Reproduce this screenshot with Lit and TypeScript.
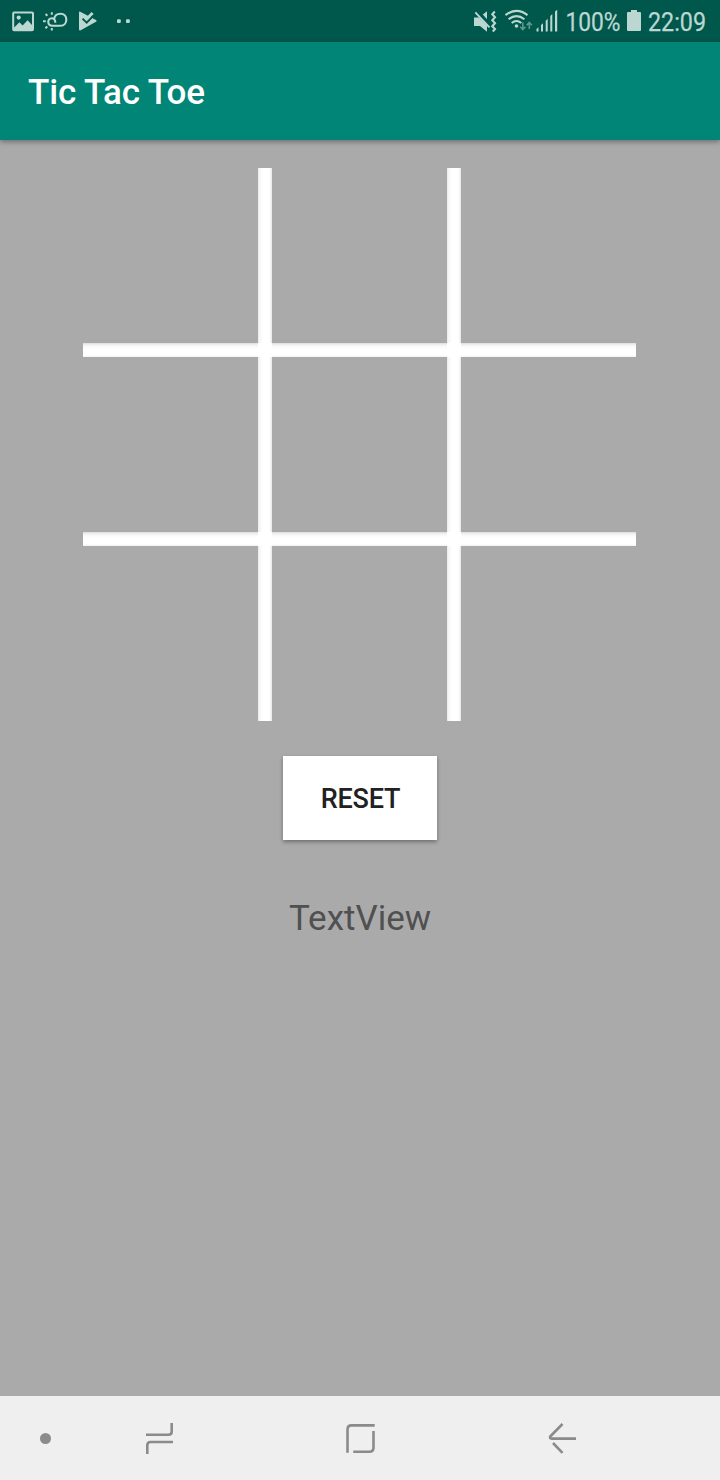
import { LitElement, html, css } from "lit";
import { customElement } from "lit/decorators.js";

@customElement("status-bar")
class StatusBar extends LitElement {
  static styles = css`
    :host { display: block; height: 42px; background: #00574b; color: #bcd7d2; }
    .bar { display: flex; justify-content: space-between; height: 42px; }
    svg { display: block; flex: none; }
    text { font-family: Roboto, sans-serif; font-size: 26px; fill: #bcd7d2; stroke: #bcd7d2; stroke-width: 0.250px; }
  `;
  render() {
    return html`
      <div class="bar">
        <svg width="140" height="42" viewBox="0 0 140 42" fill="none">
          <path fill="currentColor" fill-rule="evenodd" d="M14 11.5H32Q34 11.5 34 13.5V29.200Q34 31.200 32 31.200H14Q12.200 31.200 12.200 29.200V13.500Q12.200 11.500 14 11.500ZM14.200 13.500V27.500L19.400 22.300L22.600 25.500L27.600 20.300L32 25V13.500Z"/>
          <circle cx="18.700" cy="17.600" r="2.100" fill="currentColor"/>
          <path stroke="currentColor" stroke-width="2.100" d="M55.300 22.800C55.300 20 53.800 18.200 51.800 18.200C47 18.200 47 25.700 52.300 25.700H60.500C68.300 25.600 68.200 13.700 60.500 13.700C56.700 13.700 54.600 16 54.200 18.800"/>
          <path stroke="currentColor" stroke-width="2" d="M51.800 12.200V14.800M45.600 14L47.400 15.800M43 21.200H45.800M45.400 28.200L47.300 26.400M51.800 28V30.500"/>
          <path fill="currentColor" d="M79 12.800Q79 11 80.700 11.900L96 20.100Q97.500 21 96 21.800L80.700 30.200Q79 31 79 29.300Z"/>
          <path stroke="currentColor" stroke-width="3" d="M87 18.800L92.600 13"/>
          <path stroke="#00574b" stroke-width="2" d="M82.500 18.600L86.700 22.600L93.500 15.600"/>
          <rect x="117" y="19.200" width="3.800" height="3.800" rx="1" fill="currentColor"/>
          <rect x="126" y="19.200" width="3.800" height="3.800" rx="1" fill="currentColor"/>
        </svg>
        <svg width="255" height="42" viewBox="465 0 255 42" fill="none">
          <path fill="currentColor" d="M474 17.500H479L487 25.500V31.800L480 26H474ZM482.800 14.600L487 11.200V19.200Z"/>
          <path stroke="currentColor" stroke-width="1.900" d="M475.300 12.300L489.500 27.300"/>
          <path stroke="currentColor" stroke-width="2.100" d="M494.800 11.500L492.300 14.200L495 17.200L492.300 20.200L495 23.200L492.300 26.200L495 29L492.800 31.500"/>
          <path stroke="currentColor" stroke-width="2.100" d="M505.500 15.100Q516.500 6.800 527.500 15.100M508.600 19.200Q516.500 12.900 524.400 19.200M511.700 23Q516.500 19 521.300 23"/>
          <circle cx="516.500" cy="26" r="1.800" fill="currentColor"/>
          <path stroke="#5e978e" stroke-width="1.600" d="M522.800 22.500V29.500M520.200 26.800L522.800 29.600L525.400 26.800M529.300 29V22.500M526.700 25.200L529.300 22.400L531.900 25.200"/>
          <path fill="currentColor" d="M536.500 29L538.500 27.200V31.500H536.500ZM541 25L543 23.200V31.500H541ZM545.700 20.700L547.700 18.700V31.500H545.700ZM550.300 16L552.300 14V31.500H550.300ZM555 11.500L557.200 9.800V31.500H555Z"/>
          <text x="565.500" y="31" textLength="55" lengthAdjust="spacingAndGlyphs">100%</text>
          <path fill="currentColor" d="M631 10H637V12H640Q641 12 641 13V30Q641 31 640 31H628Q627 31 627 30V13Q627 12 628 12H631Z"/>
          <text x="648" y="31" textLength="58" lengthAdjust="spacingAndGlyphs">22:09</text>
        </svg>
      </div>
    `;
  }
}

@customElement("game-board")
class GameBoard extends LitElement {
  static styles = css`
    :host { display: block; width: 553px; height: 553px; }
    .board {
      display: grid; height: 553px;
      grid-template: 175px 14px 175px 14px 175px / 175px 14px 175px 14px 175px;
    }
    .v { grid-row: 1 / -1; background: linear-gradient(to right, #e6e6e6, #f4f4f4 1px, #fafafa 3px, #fff 5px, #fff 11px, #f4f4f4 13px, #e2e2e2 14px); }
    .h { grid-column: 1 / -1; background: linear-gradient(#dcdcdc, #ededed 1.500px, #f8f8f8 3px, #fff 6px, #fff 12px, #f2f2f2 14px); }
    .v1 { grid-column: 2; }
    .v2 { grid-column: 4; }
    .h1 { grid-row: 2; }
    .h2 { grid-row: 4; }
    .x { background: #fff; }
    .x1 { grid-area: 2 / 2; }
    .x2 { grid-area: 2 / 4; }
    .x3 { grid-area: 4 / 2; }
    .x4 { grid-area: 4 / 4; }
  `;
  render() {
    return html`
      <div class="board">
        <div class="v v1"></div><div class="v v2"></div>
        <div class="h h1"></div><div class="h h2"></div>
        <div class="x x1"></div><div class="x x2"></div>
        <div class="x x3"></div><div class="x x4"></div>
      </div>
    `;
  }
}

@customElement("nav-bar")
class NavBar extends LitElement {
  static styles = css`
    :host { display: block; height: 84px; background: #efefef; }
    .nav { display: flex; align-items: center; height: 84px; padding-left: 35px; }
    svg { display: block; flex: none; fill: none; stroke: #8b8b8b; stroke-width: 2.600px; }
    .dot { width: 20px; height: 40px; margin-right: 85px; fill: #8b8b8b; stroke: none; }
    .recent { width: 40px; height: 40px; margin-right: 160px; }
    .home { width: 40px; height: 40px; margin-right: 160px; }
    .back { width: 40px; height: 40px; }
  `;
  render() {
    return html`
      <div class="nav">
        <svg class="dot" viewBox="35 1418 20 40"><circle cx="45.500" cy="1438.500" r="5.500"/></svg>
        <svg class="recent" viewBox="140 1418 40 40">
          <path d="M171.700 1423V1431.500Q171.700 1434.800 168.400 1434.800H146M173 1442H150.500Q147.300 1442 147.300 1445.300V1454"/>
        </svg>
        <svg class="home" viewBox="340 1418 40 40">
          <path d="M374.700 1425.400H351.500Q347.500 1425.400 347.500 1429.400V1452.800M373.500 1431V1447.500Q373.500 1451.700 369.300 1451.700H353.200"/>
        </svg>
        <svg class="back" viewBox="540 1418 40 40">
          <path d="M562.500 1424L550.200 1436.500Q549.500 1438.600 551.500 1438.600H576M553 1443L562.500 1452.800"/>
        </svg>
      </div>
    `;
  }
}

@customElement("app-root")
class AppRoot extends LitElement {
  static styles = css`
    :host {
      display: flex; flex-direction: column; width: 720px; height: 1480px;
      background: #aaa; font-family: Roboto, sans-serif; overflow: hidden;
    }
    .toolbar {
      display: flex; align-items: center; height: 98px; padding: 2px 28px 0;
      box-sizing: border-box; background: #008577; color: #fff;
      font-size: 35px; font-weight: 500; letter-spacing: -0.100px;
      box-shadow: 0 2px 5px rgba(0, 0, 0, 0.35);
    }
    .content { flex: 1; display: flex; flex-direction: column; align-items: center; padding-top: 28px; }
    game-board { margin-right: 1px; }
    .reset {
      width: 154px; height: 84px; margin-top: 35px; padding: 2px 0 0 1px; border: 0;
      background: #fff; color: #212121; font: 500 27px Roboto, sans-serif; letter-spacing: -0.250px;
      box-shadow: 0 2px 4px rgba(0, 0, 0, 0.35);
    }
    .label { margin-top: 58px; font-size: 35px; line-height: 42px; color: #505050; }
  `;
  render() {
    return html`
      <status-bar></status-bar>
      <div class="toolbar"><span class="title">Tic Tac Toe</span></div>
      <div class="content">
        <game-board></game-board>
        <button class="reset">RESET</button>
        <div class="label">TextView</div>
      </div>
      <nav-bar></nav-bar>
    `;
  }
}
